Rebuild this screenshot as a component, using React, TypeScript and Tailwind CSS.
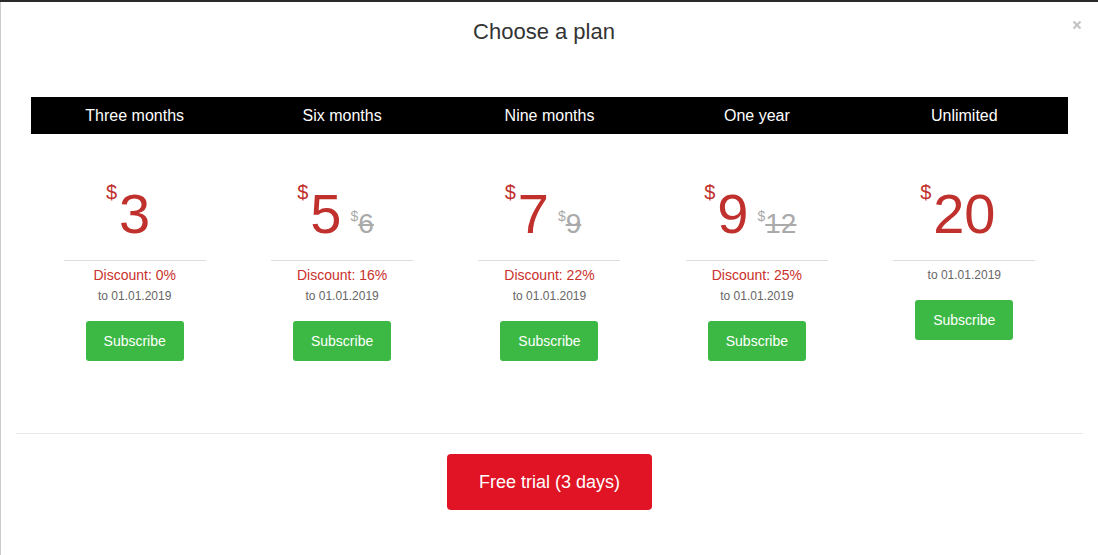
import React from "react";

type Plan = {
  title: string;
  price: string;
  old?: string;
  discount?: string;
};

const plans: Plan[] = [
  { title: "Three months", price: "3", discount: "Discount: 0%" },
  { title: "Six months", price: "5", old: "6", discount: "Discount: 16%" },
  { title: "Nine months", price: "7", old: "9", discount: "Discount: 22%" },
  { title: "One year", price: "9", old: "12", discount: "Discount: 25%" },
  { title: "Unlimited", price: "20" },
];

function PlanColumn({ p }: { p: Plan }) {
  return (
    <div className="flex flex-col items-center">
      <div className="flex items-start justify-center pt-[52px] h-[108px]">
        <span className="relative text-[56px] leading-none text-[#c0302c]">
          <span className="absolute left-[-13px] top-[-4px] text-[20px] leading-none">$</span>
          {p.price}
        </span>
        {p.old && (
          <span className="ml-[9px] mt-[23px] flex items-start text-[#aaaaaa]">
            <span className="text-[14px] leading-none">$</span>
            <span className="mt-[1px] text-[28px] leading-none line-through decoration-[1.5px]">{p.old}</span>
          </span>
        )}
      </div>
      <div className="mt-[18px] h-px w-[142px] bg-[#dddddd]" />
      {p.discount && (
        <div className="mt-[4px] text-[14px] leading-[20px] text-[#c9302c]">{p.discount}</div>
      )}
      <div className={`${p.discount ? "mt-[1px]" : "mt-[4px]"} text-[12px] leading-[20px] text-[#666666]`}>
        to 01.01.2019
      </div>
      <button className="mt-[15px] h-[40px] w-[98px] rounded-[3px] bg-[#3cb944] text-[14px] text-white">
        Subscribe
      </button>
    </div>
  );
}

export default function App() {
  return (
    <div
      className="h-[555px] w-[1098px] overflow-hidden bg-white"
      style={{ fontFamily: '"Liberation Sans", Arial, sans-serif' }}
    >
      <div className="h-[2px] bg-[#2a2a2a]" />
      <div className="relative h-[553px] border-l border-[#cccccc]">
        <div className="flex h-[58px] items-center justify-center pr-[11px] text-[22px] text-[#333333]">
          Choose a plan
        </div>
        <button className="absolute right-[16px] top-[18px] text-[#c4c4c4]" aria-label="close">
          <svg width="10" height="10" viewBox="0 0 10 10">
            <path d="M1.5 1.5 L8.5 8.5 M8.5 1.5 L1.5 8.5" stroke="currentColor" strokeWidth="2.2" />
          </svg>
        </button>
        <div className="mt-[37px] px-[30px]">
          <div className="grid h-[37px] grid-cols-5 bg-black text-[16px] text-white">
            {plans.map((p) => (
              <div key={p.title} className="flex items-center justify-center">
                {p.title}
              </div>
            ))}
          </div>
          <div className="grid grid-cols-5">
            {plans.map((p) => (
              <PlanColumn key={p.title} p={p} />
            ))}
          </div>
        </div>
        <div className="mx-[15px] mt-[72px] h-px bg-[#e8e8e8]" />
        <div className="mt-[20px] flex justify-center">
          <button className="h-[56px] w-[205px] rounded-[4px] bg-[#e01424] text-[18px] text-white">
            Free trial (3 days)
          </button>
        </div>
      </div>
    </div>
  );
}
